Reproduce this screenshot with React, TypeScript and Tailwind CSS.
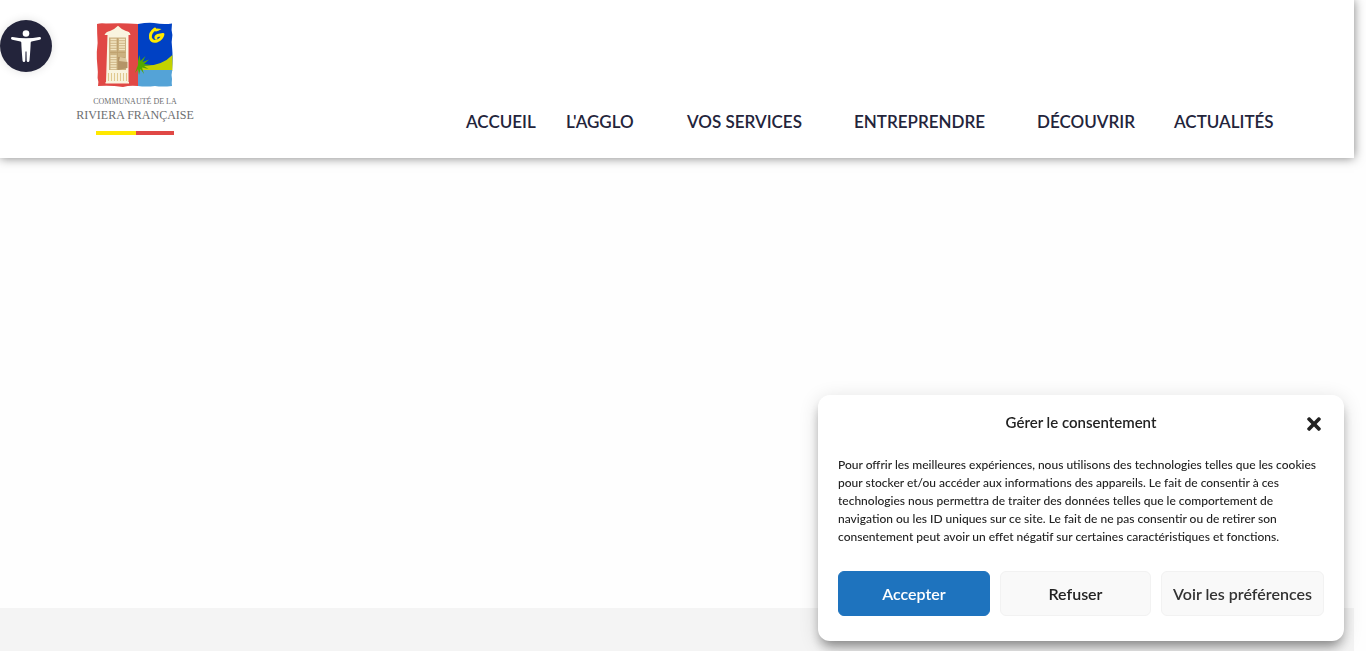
import { FaTimes } from "react-icons/fa";

const links = ["ACCUEIL", "L'AGGLO", "VOS SERVICES", "ENTREPRENDRE", "DÉCOUVRIR", "ACTUALITÉS"];

const consentLines = [
  "Pour offrir les meilleures expériences, nous utilisons des technologies telles que les cookies",
  "pour stocker et/ou accéder aux informations des appareils. Le fait de consentir à ces",
  "technologies nous permettra de traiter des données telles que le comportement de",
  "navigation ou les ID uniques sur ce site. Le fait de ne pas consentir ou de retirer son",
  "consentement peut avoir un effet négatif sur certaines caractéristiques et fonctions.",
];

function Emblem() {
  return (
    <svg viewBox="0 0 78 66" className="h-[66px] w-[78px]" aria-hidden="true">
      <path d="M1 2 Q5 .6 10 1.6 Q26 .6 42 2 V64 Q34 63 27 65 Q14 63 2 64 Q3 60 1.6 56 Q2.200 50 1.400 44 Q.6 36 .8 30 Q2.200 20 1.200 12Z" fill="#e04845" />
      <path d="M42 2 Q51 .4 58 1 Q68 3 76 1.4 Q75 8 76.4 13 Q75 20 76.2 27 Q77 35 76 48 H42Z" fill="#0041c4" />
      <path d="M42 43 Q64 46 76.4 33 V48.500 H42Z" fill="#c3d200" />
      <path d="M42 48 H76.300 Q75 53 76 57 Q75.500 61 76 64 Q66 65 59 64 Q50 65 42 64Z" fill="#54a3d7" />
      <path d="M8.500 13 Q10 9.500 14 9 Q19 7 22 3.800 Q26 8 30 9 Q34 9.500 34.500 13 H32.500 V60 H33 V61.500 H9.500 V60 H10 L11.500 13Z" fill="#f9f4df" />
      <path d="M13 15.500 H30 V48 H13Z" fill="#cbb180" />
      <path d="M21.500 16V48M14 30.500H29.500" stroke="#bd9f6c" strokeWidth=".8" />
      <path d="M14.500 17.500H20.500M14.500 20H20.500M14.500 22.500H20.500M14.500 25H20.500M14.500 27.500H20.500M23 17.500H29M23 20H29M23 22.500H29M23 25H29M23 27.500H29M14.500 34H20.500M14.500 36.500H20.500M14.500 39H20.500M14.500 41.500H20.500M14.500 44H20.500M14.500 46.500H20.500" stroke="#f3e6c2" strokeWidth="1.600" />
      <path d="M22 35 H29 V39 L31.500 40 V46 L22 48Z" fill="#b49467" />
      <path d="M24 35 L30 36 L31 40 L23 39Z" fill="#dcc79e" />
      <path d="M12.500 51V59M15.500 51V59M18.500 51V59M21.500 51V59M24.500 51V59M27.500 51V59M30.500 51V59" stroke="#dfc98f" strokeWidth="1.100" />
      <path d="M42 39 L43.500 33 L44.500 39 L49.500 34 L46.500 40 L53 37.500 L48 42 L55 43 L48 44 L52.500 47 L46 45.500 L48 52 L44.500 47 L43 53 L42 47 L39 51 L42 43Z" fill="#53a800" />
      <path d="M59 7 Q53.500 11 54.500 16 Q56 20.500 61 19 Q66 17 67 12.500 L61.500 13.500 Q59.500 14.500 60 16" fill="none" stroke="#ffea00" strokeWidth="2.900" strokeLinecap="round" strokeLinejoin="round" />
      <path d="M57 8.500 L61 6.500 L65.500 7 Q62 9 60 9.500" fill="#ffea00" />
    </svg>
  );
}

function Header() {
  return (
    <header className="relative flex h-[158px] items-start justify-between bg-white pl-[75px] pr-[82px] shadow-[0_0_10px_rgba(0,0,0,0.5)]">
      <a href="#accueil" className="flex w-[120px] flex-col items-center pt-[22px] font-['Liberation_Serif',serif] text-[#6c6e70]">
        <Emblem />
        <span className="mt-2 whitespace-nowrap text-[8px] leading-[12px]">COMMUNAUTÉ DE LA</span>
        <span className="whitespace-nowrap text-[12px] leading-[14px]">RIVIERA FRANÇAISE</span>
        <span className="mt-[9px] flex h-1 w-[78px]">
          <span className="flex-1 bg-[#ffe800]" />
          <span className="w-[38px] bg-[#e04845]" />
        </span>
      </a>
      <nav aria-label="Menu principal" className="pt-[110px]">
        <ul className="grid grid-cols-[100px_121px_167px_183px_137px_98px] text-[17px] font-semibold leading-6 text-[#23243b]">
          {links.map((label) => (
            <li key={label}>
              <a href="#menu" className="whitespace-nowrap">{label}</a>
            </li>
          ))}
        </ul>
      </nav>
    </header>
  );
}

function AccessibilityButton() {
  return (
    <button
      type="button"
      aria-label="Ouvrir la barre d'outils"
      className="fixed left-0 top-5 flex size-[52px] items-center justify-center rounded-full bg-[#23243b] text-white shadow-[0_0_10px_rgba(0,0,0,0.12)]"
    >
      <svg viewBox="0 0 30 34" className="h-[34px] w-[30px]" fill="currentColor" aria-hidden="true">
        <circle cx="15" cy="4.500" r="3.300" />
        <path d="M1.500 8 Q8 9.300 15 9.300 Q22 9.300 28.500 8 Q30 7.900 30 9.300 Q30 10.500 28.700 10.800 L20.500 12.400 Q19.700 12.600 19.700 13.500 Q19.500 20 18.500 31.500 Q18.300 33 17 33 Q15.800 33 15.700 31.500 L15.500 22.500 H14.500 L14.300 31.500 Q14.200 33 13 33 Q11.700 33 11.500 31.500 Q10.500 20 10.300 13.500 Q10.300 12.600 9.500 12.400 L1.300 10.800 Q0 10.500 0 9.300 Q0 7.900 1.500 8Z" />
      </svg>
    </button>
  );
}

function ConsentDialog() {
  return (
    <section
      role="dialog"
      aria-labelledby="consent-title"
      className="fixed bottom-[10px] right-[22px] w-[526px] max-w-full rounded-xl bg-white px-5 pb-[25px] pt-[15px] text-[#222222] shadow-[0_8px_12px_-3px_rgba(0,0,0,0.4),0_4px_20px_rgba(0,0,0,0.14)]"
    >
      <div className="grid grid-cols-[1fr_auto_1fr] items-center">
        <h2 id="consent-title" className="col-start-2 text-[15px] font-semibold leading-6">
          Gérer le consentement
        </h2>
        <button type="button" aria-label="Fermer" className="mt-1 justify-self-end">
          <FaTimes className="size-5" />
        </button>
      </div>
      <p className="mt-[22px] whitespace-nowrap text-[12px] font-medium leading-[18px]">
        {consentLines.map((line) => (
          <span key={line} className="block">{line}</span>
        ))}
      </p>
      <div className="mt-[25px] grid grid-cols-[152fr_151fr_163fr] gap-[10px] text-[16px] font-semibold">
        <button type="button" className="h-[45px] rounded-md border border-[#1e73be] bg-[#1e73be] text-white">Accepter</button>
        <button type="button" className="h-[45px] rounded-md border border-[#f2f2f2] bg-[#f9f9f9]">Refuser</button>
        <button type="button" className="h-[45px] whitespace-nowrap rounded-md border border-[#f2f2f2] bg-[#f9f9f9] text-[#333333]">Voir les préférences</button>
      </div>
    </section>
  );
}

export default function App() {
  return (
    <div className="min-h-screen overflow-hidden bg-[#fefefe] pr-3 font-['Lato',sans-serif]">
      <Header />
      <main className="min-h-[450px]" />
      <footer className="h-[43px] bg-[#f4f4f4]" />
      <AccessibilityButton />
      <ConsentDialog />
    </div>
  );
}
